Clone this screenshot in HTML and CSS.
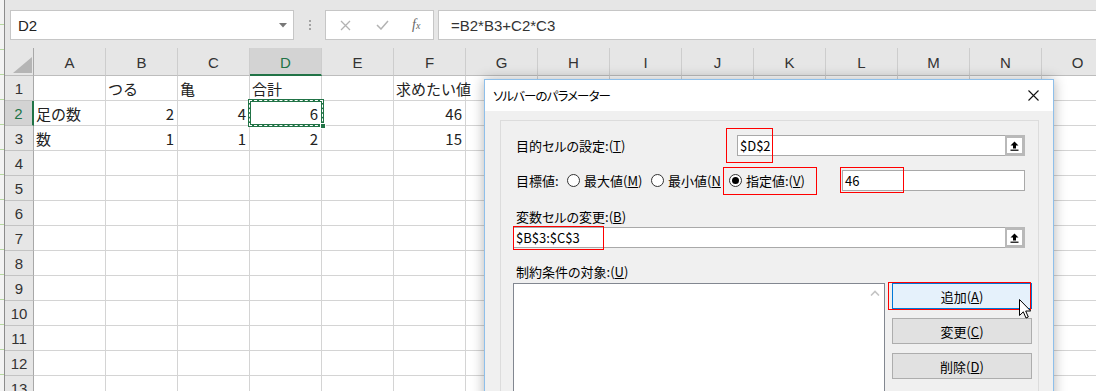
FILE: index.html
```html
<!DOCTYPE html>
<html lang="ja">
<head>
<meta charset="utf-8">
<title>ソルバーのパラメーター</title>
<link rel="stylesheet" href="styles.css">
</head>
<body>
<div class="app">
  <div class="edge"></div>
  <div class="main">
    <div class="fbar">
      <div class="namebox"><span>D2</span>
        <svg class="dd" width="8" height="5" viewBox="0 0 8 5"><polygon points="0,0 8,0 4,4.5" fill="#777"/></svg>
      </div>
      <div class="dots"><i></i><i></i><i></i></div>
      <div class="fbtns">
        <span class="fi w40"><svg width="11" height="11" viewBox="0 0 11 11"><path d="M1 1L10 10M10 1L1 10" stroke="#b3b3b3" stroke-width="1.3"/></svg></span>
        <span class="fi w30"><svg width="13" height="10" viewBox="0 0 13 10"><path d="M1 5L5 9L12 1" fill="none" stroke="#b3b3b3" stroke-width="1.5"/></svg></span>
        <span class="fi w30 fx"><i>f<small>x</small></i></span>
      </div>
      <div class="formula">=B2*B3+C2*C3</div>
    </div>
    <div class="sheet">
      <div class="hrow">
        <div class="corner"><svg width="19" height="16" viewBox="0 0 19 16"><polygon points="0,16 19,16 19,0" fill="#b5b5b5"/></svg></div>
        <div class="ch">A</div><div class="ch">B</div><div class="ch">C</div><div class="ch on">D</div><div class="ch">E</div><div class="ch">F</div><div class="ch">G</div><div class="ch">H</div><div class="ch">I</div><div class="ch">J</div><div class="ch">K</div><div class="ch">L</div><div class="ch">M</div><div class="ch">N</div><div class="ch">O</div>
      </div>
      <div class="row"><div class="rh">1</div><div class="cells">
        <div class="c"></div><div class="c">つる</div><div class="c">亀</div><div class="c">合計</div><div class="c"></div><div class="c">求めたい値</div>
      </div></div>
      <div class="row"><div class="rh on">2</div><div class="cells">
        <div class="c">足の数</div><div class="c num">2</div><div class="c num">4</div><div class="c num sel">6<span class="handle"></span></div><div class="c"></div><div class="c num">46</div>
      </div></div>
      <div class="row"><div class="rh">3</div><div class="cells">
        <div class="c">数</div><div class="c num">1</div><div class="c num">1</div><div class="c num">2</div><div class="c"></div><div class="c num">15</div>
      </div></div>
      <div class="row"><div class="rh">4</div><div class="cells"></div></div>
      <div class="row"><div class="rh">5</div><div class="cells"></div></div>
      <div class="row"><div class="rh">6</div><div class="cells"></div></div>
      <div class="row"><div class="rh">7</div><div class="cells"></div></div>
      <div class="row"><div class="rh">8</div><div class="cells"></div></div>
      <div class="row"><div class="rh">9</div><div class="cells"></div></div>
      <div class="row"><div class="rh">10</div><div class="cells"></div></div>
      <div class="row"><div class="rh">11</div><div class="cells"></div></div>
      <div class="row"><div class="rh">12</div><div class="cells"></div></div>
      <div class="row"><div class="rh">13</div><div class="cells"></div></div>
    </div>
  </div>
</div>

<div class="dialog">
  <div class="dtitle"><span class="ttl">ソルバーのパラメーター</span>
    <svg width="11" height="11" viewBox="0 0 11 11"><path d="M0.5 0.5L10.5 10.5M10.5 0.5L0.5 10.5" stroke="#111" stroke-width="1.1"/></svg>
  </div>
  <div class="dbody">
    <div class="group">
      <div class="frow">
        <div class="lab1">目的セルの設定:(<u>T</u>)</div>
        <div class="input"><span>$D$2</span><span class="refbtn"><svg width="9" height="10" viewBox="0 0 9 10"><path d="M4.5 0.5L8.5 4.5H6V7.5H3V4.5H0.5Z" fill="#000"/><rect x="0.5" y="8.6" width="8" height="1.2" fill="#000"/></svg></span></div>
      </div>
      <div class="frow r2">
        <div class="lab2">目標値:</div>
        <div class="opt o1"><span class="radio"></span><span>最大値(<u>M</u>)</span></div>
        <div class="opt o2"><span class="radio"></span><span>最小値(<u>N</u></span></div>
        <div class="opt o3"><span class="radio on"></span><span>指定値:(<u>V</u>)</span></div>
        <div class="input"><span>46</span></div>
      </div>
      <div class="lab3">変数セルの変更:(<u>B</u>)</div>
      <div class="input wide"><span>$B$3:$C$3</span><span class="refbtn"><svg width="9" height="10" viewBox="0 0 9 10"><path d="M4.5 0.5L8.5 4.5H6V7.5H3V4.5H0.5Z" fill="#000"/><rect x="0.5" y="8.6" width="8" height="1.2" fill="#000"/></svg></span></div>
      <div class="lab4">制約条件の対象:(<u>U</u>)</div>
      <div class="bottom">
        <div class="list"><svg width="10" height="6" viewBox="0 0 10 6"><path d="M1 5.5L5 1.5L9 5.5" fill="none" stroke="#c4c4c4" stroke-width="1.6"/></svg></div>
        <div class="btns">
          <div class="btn hot">追加(<u>A</u>)</div>
          <div class="btn">変更(<u>C</u>)</div>
          <div class="btn">削除(<u>D</u>)</div>
        </div>
      </div>
    </div>
  </div>
</div>

<div class="mark m1"></div>
<div class="mark m2"></div>
<div class="mark m3"></div>
<div class="mark m4"></div>
<div class="mark m5"></div>

<svg class="cursor" width="13" height="20" viewBox="0 0 13 20"><path d="M0.5 0.5V16.5L4.3 12.8L7 19L9.3 18L6.7 12H11.7Z" fill="#fff" stroke="#000" stroke-width="1"/></svg>
</body>
</html>
```

FILE: styles.css
```css
* { box-sizing: border-box; }
html, body { margin: 0; }
body {
  width: 1096px;
  height: 391px;
  overflow: hidden;
  position: relative;
  background: #fff;
  font-family: "Liberation Sans", Arial, sans-serif;
  color: #222;
}
.app { display: flex; height: 391px; }
.edge {
  width: 5px;
  flex: none;
  border-right: 1px solid #8c8c8c;
  background: #f3f3f3 repeating-linear-gradient(to bottom, transparent 0 24px, #b7d99f 24px 25px);
}
.main { flex: 1; min-width: 0; overflow: hidden; }

/* formula bar */
.fbar {
  height: 48px;
  background: #e6e6e6;
  display: flex;
  align-items: flex-start;
  padding: 10px 0 0 5px;
}
.namebox {
  width: 284px; height: 30px; flex: none;
  background: #fff;
  border: 1px solid #c6c6c6;
  display: flex; align-items: center; justify-content: space-between;
  padding: 0 6px 0 7px;
  font-size: 15px; color: #222;
}
.dots {
  width: 31px; height: 30px; flex: none;
  display: flex; flex-direction: column; align-items: center; justify-content: center; gap: 2px;
}
.dots i { display: block; width: 2px; height: 2px; background: #a3a3a3; }
.fbtns {
  width: 109px; height: 30px; flex: none;
  background: #fff;
  border: 1px solid #c6c6c6;
  display: flex; align-items: center;
}
.fi { display: flex; align-items: center; justify-content: center; height: 28px; }
.w40 { width: 40px; }
.w30 { width: 34px; }
.fx { font-family: "Liberation Serif", serif; font-size: 14px; color: #666; }
.fx small { font-size: 10px; }
.formula {
  flex: 1;
  margin-left: 4px;
  height: 30px;
  background: #fff;
  border: 1px solid #c6c6c6;
  border-right: none;
  padding-left: 12px;
  font-size: 15px;
  color: #333;
  display: flex; align-items: center;
}

/* sheet */
.hrow { display: flex; height: 28px; }
.corner {
  width: 29px; flex: none;
  background: #e6e6e6;
  border-right: 1px solid #a8a8a8;
  border-bottom: 1px solid #bdbdbd;
  display: flex; align-items: flex-end; justify-content: flex-end;
  padding: 0 1px 2px 0;
}
.ch {
  width: 72px; flex: none;
  background: #e6e6e6;
  border-right: 1px solid #cdcdcd;
  border-bottom: 1px solid #bdbdbd;
  display: flex; align-items: center; justify-content: center;
  font-size: 15px; color: #333;
  padding-top: 2px;
}
.ch.on {
  background: #d3d3d3;
  color: #217346;
  border-bottom: 2px solid #217346;
}
.row { display: flex; height: 25px; }
.rh {
  width: 29px; flex: none;
  background: #e6e6e6;
  border-right: 1px solid #a8a8a8;
  border-bottom: 1px solid #c3c3c3;
  display: flex; align-items: center; justify-content: center;
  font-size: 15px; color: #333;
}
.rh.on {
  background: #d3d3d3;
  color: #217346;
  border-right: 2px solid #217346;
}
.cells {
  flex: 1;
  display: flex;
  border-bottom: 1px solid #d4d4d4;
  background: repeating-linear-gradient(to right, transparent 0 71px, #d4d4d4 71px 72px);
}
.c {
  width: 72px; flex: none;
  display: flex; align-items: center;
  padding: 0 4px 0 2px;
  white-space: nowrap;
  font-family: "Noto Sans CJK JP", "Liberation Sans", sans-serif;
  font-size: 15px;
  color: #222;
}
.c.num { justify-content: flex-end; }
.sel { position: relative; }
.sel::before {
  content: "";
  position: absolute;
  inset: -2px;
  border: 3px solid #217346;
}
.sel::after {
  content: "";
  position: absolute;
  inset: -1px;
  border: 1px dashed #fff;
}
.handle {
  position: absolute;
  right: -4px; bottom: -4px;
  width: 6px; height: 6px;
  background: #217346;
  border: 1px solid #fff;
  z-index: 2;
}

/* dialog */
.dialog {
  position: absolute;
  left: 484px; top: 79px;
  width: 570px; height: 330px;
  background: #f0f0f0;
  border: 1px solid #8ebfea;
  box-shadow: 0 0 12px rgba(0, 0, 0, 0.3);
  font-family: "Noto Sans CJK JP", sans-serif;
  font-size: 13px;
  font-feature-settings: "palt";
  color: #000;
}
.dtitle {
  height: 31px;
  background: #fff;
  display: flex; align-items: center; justify-content: space-between;
  padding: 0 14px 0 8px;
}
.ttl { font-size: 12.5px; letter-spacing: -0.9px; }
.dbody { padding: 9px 14px 0 15px; }
.group {
  border: 1px solid #dcdcdc;
  height: 300px;
  padding: 14px 13px 0 12px;
}
.frow { display: flex; align-items: center; height: 21px; }
.frow.r2 { margin-top: 14px; }
.lab1 { width: 224px; flex: none; padding-left: 3px; }
.lab2 { width: 54px; flex: none; padding-left: 3px; }
.input {
  flex: 1;
  height: 21px;
  background: #fff;
  border: 1px solid #a9a9a9;
  display: flex; align-items: center; justify-content: space-between;
  padding-left: 2px;
}
.input.wide { margin-top: 2px; }
.refbtn {
  width: 20px; height: 21px;
  margin: -1px -1px -1px 0;
  border: 3px solid #b9b9b9;
  border-left-width: 2px;
  background: #fff;
  display: flex; align-items: center; justify-content: center;
}
.opt { display: flex; align-items: center; gap: 4px; flex: none; white-space: nowrap; }
.o1 { width: 84px; }
.o2 { width: 78px; }
.o3 { width: 113px; }
.radio {
  width: 13px; height: 13px; flex: none;
  border: 1px solid #333;
  border-radius: 50%;
  background: #fff;
  display: flex; align-items: center; justify-content: center;
}
.radio.on::after {
  content: "";
  width: 7px; height: 7px;
  border-radius: 50%;
  background: #000;
}
.lab3 { margin-top: 18px; height: 16px; line-height: 16px; padding-left: 3px; }
.lab4 { margin-top: 16px; height: 16px; line-height: 16px; padding-left: 3px; }
.bottom { display: flex; margin-top: 3px; }
.list {
  width: 372px; height: 120px; flex: none;
  background: #fff;
  border: 1px solid #828790;
  display: flex; justify-content: flex-end; align-items: flex-start;
  padding: 6px 4px 0 0;
}
.btns { margin-left: 7px; flex: none; display: flex; flex-direction: column; gap: 9px; }
.btn {
  width: 140px; height: 26px;
  border: 1px solid #adadad;
  background: #e1e1e1;
  display: flex; align-items: center; justify-content: center;
}
.btn.hot { background: #e5f1fb; border-color: #0078d7; }

/* annotations */
.mark { position: absolute; border: 1.6px solid #f00; }
.m1 { left: 726px; top: 128px; width: 47px; height: 35px; }
.m2 { left: 723px; top: 167px; width: 94px; height: 28px; }
.m3 { left: 840px; top: 167px; width: 64px; height: 26px; }
.m4 { left: 513px; top: 226px; width: 91px; height: 24px; }
.m5 { left: 888px; top: 282px; width: 143px; height: 28px; }
.cursor { position: absolute; left: 1019px; top: 299px; }
```
